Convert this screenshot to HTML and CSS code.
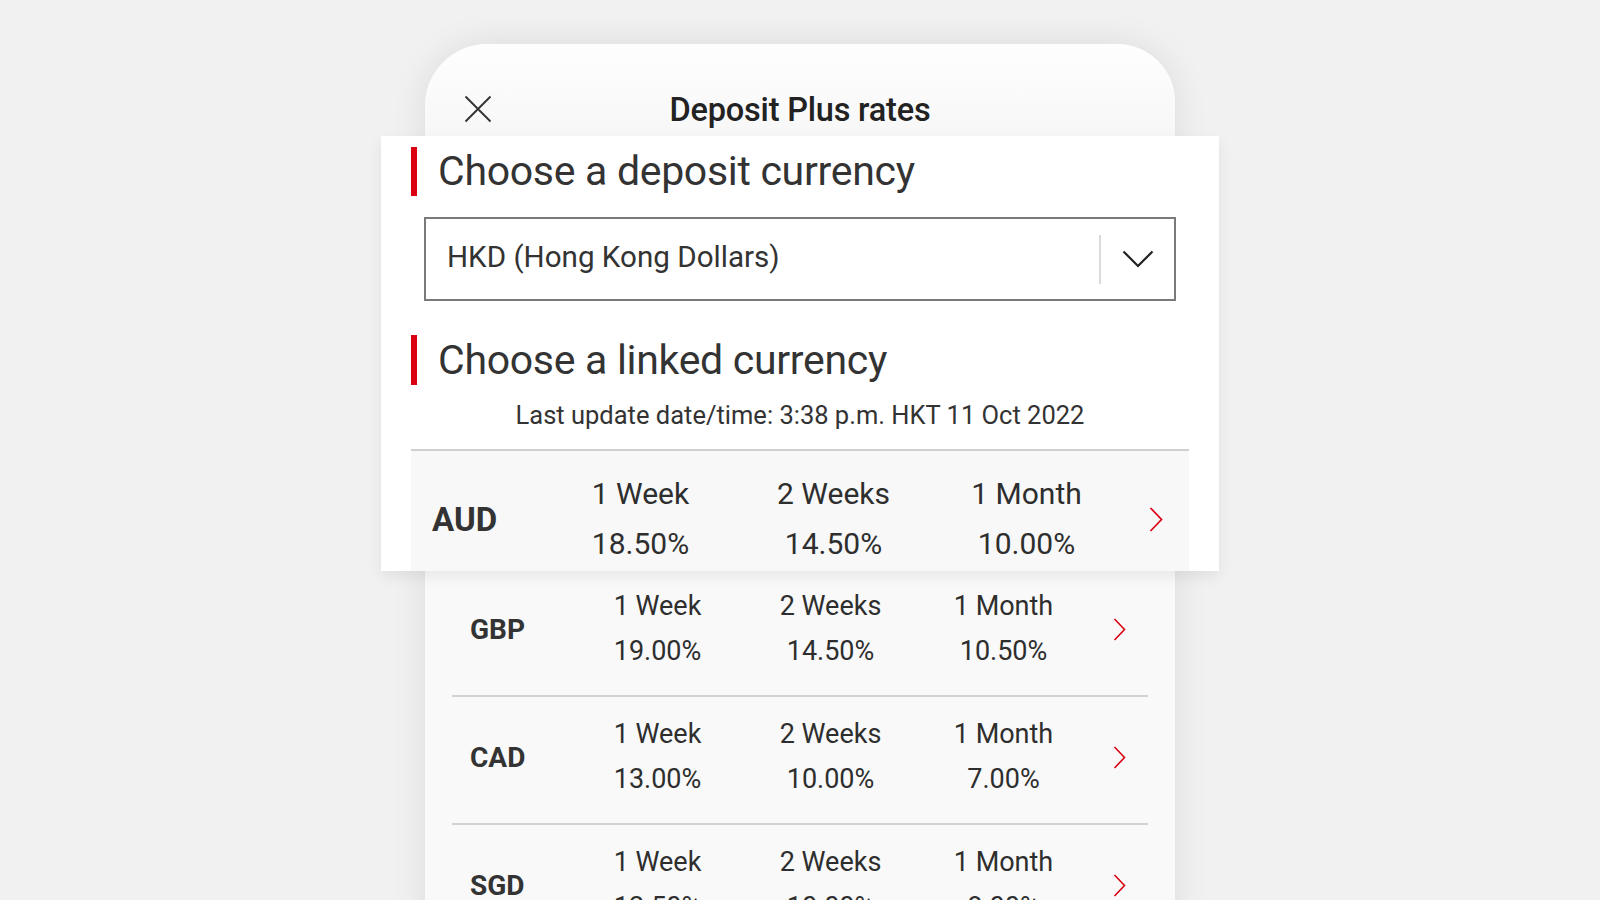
FILE: index.html
```html
<!DOCTYPE html>
<html lang="en">
<head>
<meta charset="utf-8">
<title>Deposit Plus rates</title>
<link rel="stylesheet" href="styles.css">
</head>
<body>
<div class="stage">
  <div class="phone">
    <header class="phone-header">
      <div class="close-cell">
        <svg class="close-icon" width="28" height="28" viewBox="0 0 28 28" aria-label="Close">
          <path d="M1.5 1.5L26.5 26.5M26.5 1.5L1.5 26.5" stroke="#333" stroke-width="1.9" fill="none"/>
        </svg>
      </div>
      <h1 class="phone-title">Deposit Plus rates</h1>
      <div class="spacer-cell"></div>
    </header>
    <div class="phone-covered" aria-hidden="true"></div>
    <div class="phone-rows">
      <div class="rate-row">
        <div class="ccy">GBP</div>
        <div class="term"><span>1 Week</span><span>19.00%</span></div>
        <div class="term"><span>2 Weeks</span><span>14.50%</span></div>
        <div class="term"><span>1 Month</span><span>10.50%</span></div>
        <div class="go"><svg width="13" height="23" viewBox="0 0 13 23"><path d="M1.5 1L11.5 11.5L1.5 22" stroke="#db0011" stroke-width="1.6" fill="none"/></svg></div>
      </div>
      <div class="rate-row">
        <div class="ccy">CAD</div>
        <div class="term"><span>1 Week</span><span>13.00%</span></div>
        <div class="term"><span>2 Weeks</span><span>10.00%</span></div>
        <div class="term"><span>1 Month</span><span>7.00%</span></div>
        <div class="go"><svg width="13" height="23" viewBox="0 0 13 23"><path d="M1.5 1L11.5 11.5L1.5 22" stroke="#db0011" stroke-width="1.6" fill="none"/></svg></div>
      </div>
      <div class="rate-row">
        <div class="ccy">SGD</div>
        <div class="term"><span>1 Week</span><span>12.50%</span></div>
        <div class="term"><span>2 Weeks</span><span>10.00%</span></div>
        <div class="term"><span>1 Month</span><span>8.00%</span></div>
        <div class="go"><svg width="13" height="23" viewBox="0 0 13 23"><path d="M1.5 1L11.5 11.5L1.5 22" stroke="#db0011" stroke-width="1.6" fill="none"/></svg></div>
      </div>
    </div>
  </div>

  <section class="magnifier">
    <h2 class="section-title">Choose a deposit currency</h2>
    <div class="select-box">
      <span class="select-value">HKD (Hong Kong Dollars)</span>
      <span class="select-divider"></span>
      <span class="select-arrow">
        <svg width="32" height="18" viewBox="0 0 32 18"><path d="M1.5 1.5L16 16L30.5 1.5" stroke="#222" stroke-width="2.2" fill="none"/></svg>
      </span>
    </div>
    <h2 class="section-title second">Choose a linked currency</h2>
    <p class="update-time">Last update date/time: 3:38 p.m. HKT 11 Oct 2022</p>
    <div class="mag-row">
      <div class="ccy">AUD</div>
      <div class="term"><span>1 Week</span><span>18.50%</span></div>
      <div class="term"><span>2 Weeks</span><span>14.50%</span></div>
      <div class="term"><span>1 Month</span><span>10.00%</span></div>
      <div class="go"><svg width="14" height="25" viewBox="0 0 14 25"><path d="M1.5 1L12.5 12.5L1.5 24" stroke="#db0011" stroke-width="1.7" fill="none"/></svg></div>
    </div>
  </section>
</div>
</body>
</html>
```

FILE: styles.css
```css
* { box-sizing: border-box; }

html, body {
  margin: 0;
  padding: 0;
  width: 1600px;
  height: 900px;
  overflow: hidden;
  background: #f1f1f1;
  font-family: Roboto, "Liberation Sans", sans-serif;
  color: #2e2e2e;
}

.stage {
  position: relative;
  width: 1600px;
  height: 900px;
  padding-top: 44px;
  overflow: hidden;
}

.phone {
  margin-left: 425px;
  width: 750px;
  height: 1000px;
  background: #f9f9f9;
  border-radius: 62px 58px 0 0;
  box-shadow: 0 0 36px rgba(0, 0, 0, 0.09);
  overflow: hidden;
}

.phone-header {
  display: grid;
  grid-template-columns: 1fr auto 1fr;
  align-items: center;
  padding-top: 35px;
  height: 97px;
  background: linear-gradient(#fefefe, #f7f7f7);
}

.close-cell {
  padding-left: 39px;
  height: 34px;
  display: flex;
  align-items: center;
}

.close-icon { display: block; margin-top: -2px; }

.phone-title {
  margin: 0;
  font-size: 32.5px;
  line-height: 34px;
  font-weight: 500;
  color: #222;
  letter-spacing: -0.2px;
}

.phone-covered {
  height: 428px;
}

.phone-rows {
  padding: 0 27px;
}

.rate-row {
  display: grid;
  grid-template-columns: 119px 173px 173px 173px 58px;
  align-items: center;
  padding: 15px 0 21px;
  border-bottom: 2px solid #d2d2d2;
  font-size: 27px;
  color: #2e2e2e;
}

.rate-row .ccy {
  padding-left: 18px;
  font-weight: 700;
  font-size: 28px;
  color: #333;
}

.rate-row .term {
  display: flex;
  flex-direction: column;
  align-items: center;
  line-height: 45px;
}

.go {
  display: flex;
  justify-content: center;
  align-items: center;
}

.go svg { display: block; }

/* magnified panel */
.magnifier {
  position: absolute;
  left: 381px;
  top: 136px;
  width: 838px;
  height: 435px;
  overflow: hidden;
  background: #fff;
  padding: 11px 30px 0;
  box-shadow: 0 6px 14px rgba(0, 0, 0, 0.07);
}

.section-title {
  margin: 0;
  height: 49px;
  border-left: 6px solid #db0011;
  padding-left: 21px;
  font-size: 41px;
  letter-spacing: -0.3px;
  line-height: 49px;
  font-weight: 400;
  color: #333;
  white-space: nowrap;
}

.section-title.second {
  margin-top: 34px;
  height: 50px;
  line-height: 50px;
}

.select-box {
  margin: 21px 13px 0;
  height: 84px;
  border: 2px solid #7a7a7a;
  display: flex;
  align-items: center;
}

.select-value {
  flex: 1;
  padding-left: 21px;
  padding-bottom: 5px;
  font-size: 29.6px;
  color: #333;
}

.select-divider {
  width: 2px;
  height: 49px;
  background: #dadada;
}

.select-arrow {
  width: 73px;
  display: flex;
  justify-content: center;
  align-items: center;
}

.select-arrow svg { display: block; }

.update-time {
  margin: 15px 0 0;
  height: 30px;
  line-height: 30px;
  text-align: center;
  font-size: 25.5px;
  color: #333;
}

.mag-row {
  margin-top: 19px;
  border-top: 2px solid #cfcfcf;
  background: #f8f8f8;
  display: grid;
  grid-template-columns: 133px 193px 193px 193px 66px;
  align-items: center;
  padding: 18px 0 12px;
  font-size: 30px;
  color: #2e2e2e;
}

.mag-row .ccy {
  padding-left: 21px;
  font-weight: 700;
  font-size: 33px;
  color: #333;
}

.mag-row .term {
  display: flex;
  flex-direction: column;
  align-items: center;
  line-height: 50px;
}
```
